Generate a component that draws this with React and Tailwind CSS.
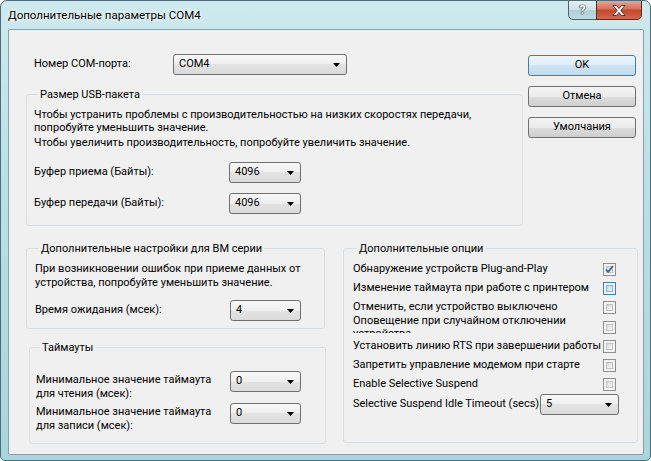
import React from 'react';

const btnGray = 'bg-[linear-gradient(#f3f3f3,#ebebeb_50%,#dddddd_50%,#cfcfcf)] border-[#707070]';
const btnBlue = 'bg-[linear-gradient(#eaf5fc,#dfeef9_50%,#cde4f4_50%,#c1dcef)] border-[#3c7fb1]';

function Arrow() {
  return (
    <svg width="7" height="4" viewBox="0 0 7 4">
      <path d="M0 0h7L3.5 4z" fill="#000" />
    </svg>
  );
}

function Combo({ value, className }) {
  return (
    <div
      className={`flex h-[21px] shrink-0 items-center justify-between rounded-[3px] border border-[#707070] bg-[linear-gradient(#f7f7f7,#efefef_50%,#e3e3e3_50%,#dadada)] pl-[5px] pr-[6px] ${className}`}
    >
      <span>{value}</span>
      <Arrow />
    </div>
  );
}

function Button({ children, primary }) {
  return (
    <div
      className={`flex h-[21px] items-center justify-center rounded-[3px] border ${primary ? btnBlue : btnGray}`}
    >
      {children}
    </div>
  );
}

function Check({ checked, hover }) {
  return (
    <div
      className={`flex h-[13px] w-[13px] shrink-0 items-center justify-center border bg-[#f4f4f4] p-[2px] ${hover ? 'border-[#3c7fb1]' : 'border-[#8e8f8f]'}`}
    >
      <div
        className={`flex h-full w-full items-center justify-center border ${hover ? 'border-[#79b7e0] bg-[linear-gradient(135deg,#b9def5,#e6f4fd)]' : 'border-[#c2c2c2] bg-[linear-gradient(135deg,#d8d8d8,#f8f8f8)]'}`}
      >
        {checked && (
          <svg width="9" height="9" viewBox="0 0 9 9" className="-m-[2px]">
            <path d="M1 4.5l2.2 2.4L8 1" fill="none" stroke="#4a5f92" strokeWidth="1.8" />
          </svg>
        )}
      </div>
    </div>
  );
}

function Group({ title, className, children }) {
  return (
    <fieldset className={`rounded-[3px] border border-[#d5dfe5] ${className}`}>
      <legend className="ml-[4px] px-[2px] leading-[13px]">{title}</legend>
      {children}
    </fieldset>
  );
}

function OptionRow({ label, h, children }) {
  return (
    <div className={`flex items-center ${h}`}>
      <div className="w-[250px] whitespace-nowrap">{label}</div>
      {children}
    </div>
  );
}

export default function App() {
  return (
    <div className="flex h-[461px] w-[651px] flex-col overflow-hidden rounded-t-[7px] rounded-b-[5px] border border-[#4f6d76] bg-[linear-gradient(#cdeaee,#b9e0e5_40%,#a9d5dc)] font-['Roboto',sans-serif] text-[11px] text-black">
      <div className="flex h-[28px] shrink-0 justify-between pl-[7px] pr-[8px]">
        <span className="self-center whitespace-nowrap pt-[2px] text-[11.5px] [text-shadow:0_0_6px_#ffffff,0_0_3px_#ffffff]">
          Дополнительные параметры COM4
        </span>
        <div className="-mt-[1px] flex h-[20px]">
          <div className="flex w-[29px] items-center justify-center rounded-bl-[5px] border border-[#4b6470] bg-[linear-gradient(#e4f1f4,#c9e0e6_50%,#b2d0d8_50%,#bcd9df)] text-[13px] font-bold text-white [text-shadow:0_0_1px_#253841,0_0_1px_#253841,0_0_1px_#253841]">
            ?
          </div>
          <div className="-ml-[1px] flex w-[46px] items-center justify-center rounded-br-[5px] border border-[#5b2a22] bg-[linear-gradient(#e8a593,#d46f58_45%,#c4462d_50%,#d1684a)]">
            <svg width="14" height="11" viewBox="0 0 14 11">
              <path
                d="M1 0.5h3.5L7 3.6 9.5 0.5H13L8.8 5.5 13 10.5H9.5L7 7.4 4.5 10.5H1l4.2-5z"
                fill="#fff"
                stroke="#3a2b28"
                strokeWidth="0.9"
              />
            </svg>
          </div>
        </div>
      </div>

      <div className="mb-[5px] ml-[7px] mr-[6px] flex-1 whitespace-nowrap rounded-[2px] border border-[#8a9fa6] bg-[#f0f0f0] pl-[17px] pt-[24px]">
        <div className="flex items-start">
          <div className="w-[497px]">
            <div className="flex h-[21px] items-center">
              <div className="w-[147px] pl-[8px]">Номер COM-порта:</div>
              <Combo value="COM4" className="w-[174px]" />
            </div>

            <Group title="Размер USB-пакета" className="mt-[13px] w-[497px] pb-[11px] pl-[7px]">
              <div className="pt-[7px] leading-[13px]">
                <p>Чтобы устранить проблемы с производительностью на низких скоростях передачи,</p>
                <p>попробуйте уменьшить значение.</p>
                <p className="mt-[2px]">Чтобы увеличить производительность, попробуйте увеличить значение.</p>
              </div>
              <div className="mt-[13px] flex items-center">
                <div className="w-[195px]">Буфер приема (Байты):</div>
                <Combo value="4096" className="w-[72px]" />
              </div>
              <div className="mt-[10px] flex items-center">
                <div className="w-[195px]">Буфер передачи (Байты):</div>
                <Combo value="4096" className="w-[72px]" />
              </div>
            </Group>
          </div>

          <div className="ml-[5px] mt-[1px] flex w-[108px] flex-col gap-[10px]">
            <Button primary>OK</Button>
            <Button>Отмена</Button>
            <Button>Умолчания</Button>
          </div>
        </div>

        <div className="mt-[16px] flex items-start">
          <div className="w-[299px]">
            <Group title="Дополнительные настройки для BM серии" className="w-[299px] pb-[7px] pl-[8px]">
              <div className="pt-[7px] leading-[14px]">
                <p>При возникновении ошибок при приеме данных от</p>
                <p>устройства, попробуйте уменьшить значение.</p>
              </div>
              <div className="mt-[10px] flex items-center">
                <div className="w-[195px]">Время ожидания (мсек):</div>
                <Combo value="4" className="w-[71px]" />
              </div>
            </Group>

            <Group title="Таймауты" className="ml-[3px] mt-[12px] w-[297px] pb-[10px] pl-[6px]">
              <div className="flex items-start pt-[17px]">
                <div className="w-[194px] pt-[2px] leading-[14px]">
                  <p>Минимальное значение таймаута</p>
                  <p>для чтения (мсек):</p>
                </div>
                <Combo value="0" className="w-[71px]" />
              </div>
              <div className="mt-[2px] flex items-start">
                <div className="w-[194px] pt-[2px] leading-[14px]">
                  <p>Минимальное значение таймаута</p>
                  <p>для записи (мсек):</p>
                </div>
                <Combo value="0" className="w-[71px]" />
              </div>
            </Group>
          </div>

          <Group title="Дополнительные опции" className="ml-[18px] w-[295px] pb-[27px] pl-[9px]">
            <div className="pt-[5px]">
              <OptionRow label="Обнаружение устройств Plug-and-Play" h="h-[19px]">
                <Check checked />
              </OptionRow>
              <OptionRow label="Изменение таймаута при работе с принтером" h="h-[19px]">
                <Check hover />
              </OptionRow>
              <OptionRow label="Отменить, если устройство выключено" h="h-[19px]">
                <Check />
              </OptionRow>
              <div className="flex h-[20px] items-center">
                <div className="-mt-[3px] h-[19px] w-[225px] self-start overflow-hidden whitespace-normal leading-[13px]">
                  Оповещение при случайном отключении устройства
                </div>
                <div className="ml-[25px]">
                  <Check />
                </div>
              </div>
              <OptionRow label="Установить линию RTS при завершении работы" h="h-[19px]">
                <Check />
              </OptionRow>
              <OptionRow label="Запретить управление модемом при старте" h="h-[19px]">
                <Check />
              </OptionRow>
              <OptionRow label="Enable Selective Suspend" h="h-[19px]">
                <Check />
              </OptionRow>
              <div className="flex items-center">
                <div className="w-[187px]">Selective Suspend Idle Timeout (secs):</div>
                <Combo value="5" className="w-[79px]" />
              </div>
            </div>
          </Group>
        </div>
      </div>
    </div>
  );
}
